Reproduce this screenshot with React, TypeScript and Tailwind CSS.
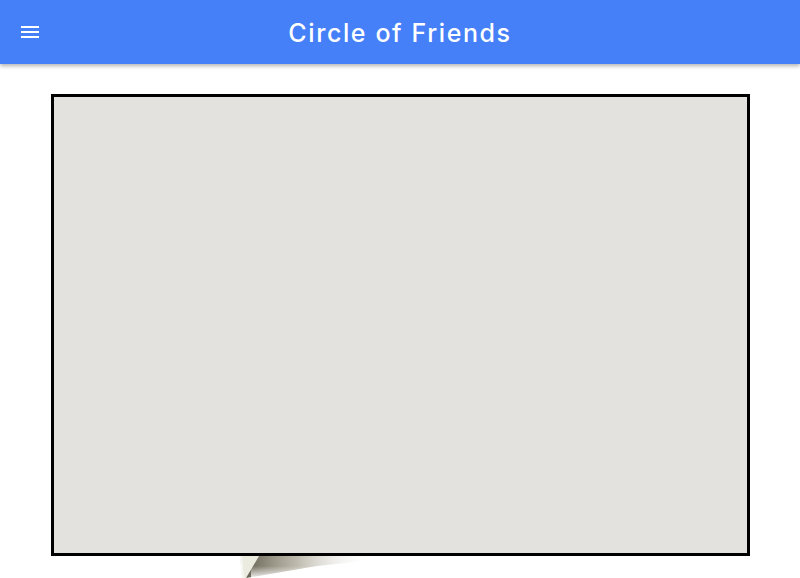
const MenuIcon = () => (
  <svg width="18" height="12" viewBox="0 0 18 12" className="block shrink-0">
    <rect x="0" y="0" width="18" height="2" fill="#fff" />
    <rect x="0" y="5" width="18" height="2" fill="#fff" />
    <rect x="0" y="10" width="18" height="2" fill="#fff" />
  </svg>
);

const PageCurl = () => (
  <svg width="140" height="22" viewBox="0 0 140 22" className="block">
    <defs>
      <linearGradient id="shade" x1="0" y1="0" x2="1" y2="0">
        <stop offset="0" stopColor="#5f5a4a" stopOpacity="0.95" />
        <stop offset="0.4" stopColor="#a09b88" stopOpacity="0.7" />
        <stop offset="1" stopColor="#ffffff" stopOpacity="0" />
      </linearGradient>
      <linearGradient id="fade" x1="0" y1="0" x2="0" y2="1">
        <stop offset="0" stopColor="#ffffff" stopOpacity="0" />
        <stop offset="1" stopColor="#ffffff" stopOpacity="0.9" />
      </linearGradient>
    </defs>
    <polygon points="3,0 22,0 9,22 5,22" fill="#ecebe0" />
    <polygon points="3,0 5,0 7,22 5,22" fill="#f6f6f3" />
    <polygon points="22,0 135,0 135,4 80,10 9,22" fill="url(#shade)" />
    <rect x="14" y="10" width="126" height="12" fill="url(#fade)" />
  </svg>
);

export default function App() {
  return (
    <div className="min-h-[578px] bg-white font-['Inter',sans-serif]">
      <header className="relative z-10 flex h-16 items-center bg-[#4580f8] px-[21px] shadow-[0_2px_4px_rgba(0,0,0,0.3)]">
        <MenuIcon />
        <h1 className="flex-1 pt-[3px] text-center text-[25px] font-[450] tracking-[1.6px] text-white">
          Circle of Friends
        </h1>
        <div className="w-[18px] shrink-0" />
      </header>
      <main className="flex flex-col items-center pt-[30px]">
        <div className="h-[462px] w-[699px] border-[3px] border-black bg-[#e3e2de]" />
        <div className="w-[699px] pl-[186px]">
          <PageCurl />
        </div>
      </main>
    </div>
  );
}
